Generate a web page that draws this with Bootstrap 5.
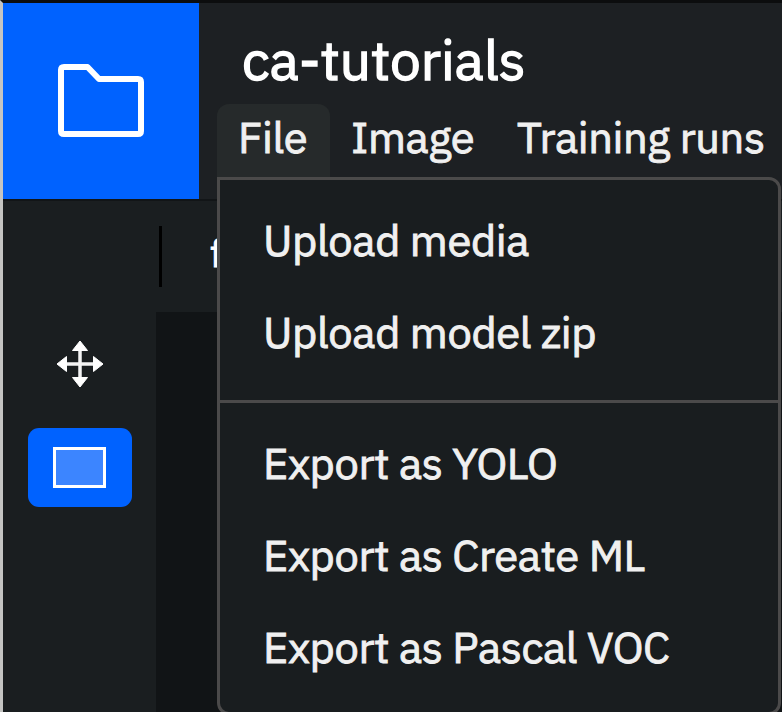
<!DOCTYPE html>
<html lang="en" data-bs-theme="dark">
<head>
<meta charset="utf-8">
<meta name="viewport" content="width=device-width, initial-scale=1">
<title>ca-tutorials</title>
<link href="https://cdn.jsdelivr.net/npm/bootstrap@5.3.0/dist/css/bootstrap.min.css" rel="stylesheet">
<style>
body { font-family: "IBM Plex Sans", Roboto, "Liberation Sans", sans-serif; background: #1a1e20; color: #f2f2f2; -webkit-text-stroke: .9px currentColor; }
.app { height: 712px; border-left: 3px solid #c4c4c2; border-top: 3px solid #0c0d0e; }
.topbar { height: 198px; background: #1d2023; border-bottom: 2px solid #121517; }
.project-btn { width: 196px; height: 196px; background: #0062ff; }
.titles { padding: 27px 0 0 18px; }
.project-name { font-size: 55px; line-height: 60px; height: 74px; margin: 0 0 0 25px; color: #fff; font-weight: 400; letter-spacing: -.05px; -webkit-text-stroke-width: 1.400px; }
.menu-tab { height: 76px; font-size: 43.500px; line-height: 65px; padding: 0 0 0 21px; border-radius: 12px 12px 0 0; color: #f0f0f0; white-space: nowrap; letter-spacing: -.4px; }
.menu-tab.active { background: #262a2b; }
.t-file { width: 113px; }
.t-image { width: 166px; }
.toolbar-row { height: 111px; padding: 25px 0 0 156px; }
.divider { width: 3px; height: 61px; background: #000; }
.file-label { font-size: 38px; line-height: 54px; margin-left: 48px; color: #fff; }
.tools { width: 153px; padding-top: 25px; gap: 37px; }
.tool-on { width: 104px; height: 79px; border-radius: 11px; background: #0062ff; }
.canvas-area { background: #111416; }
.file-menu { position: absolute; left: 217px; top: 177px; width: 564px; height: 538px; background: #191d1f; border: 3px solid #4b4a4a; border-radius: 0 12px 12px 12px; padding: 14px 0 0; font-size: 43.500px; letter-spacing: -.4px; }
.file-menu .dropdown-item { height: 92px; line-height: 92px; padding: 0 0 0 43px; color: #f0f0f0; background: none; }
.file-menu .dropdown-divider { margin: 22px 0 14px; border-top: 3px solid #4b4a4a; opacity: 1; }
</style>
</head>
<body class="overflow-hidden">
<div class="app d-flex flex-column position-relative overflow-hidden">
  <header class="topbar d-flex flex-shrink-0">
    <div class="project-btn d-flex flex-shrink-0 align-items-center justify-content-center">
      <svg width="88" height="76" viewBox="0 0 88 76" fill="none" stroke="#fff" stroke-width="6" stroke-linejoin="round"><path d="M7 4H30.500L42 16H81Q84 16 84 19V68Q84 71 81 71H7Q4 71 4 68V7Q4 4 7 4Z"/></svg>
    </div>
    <div class="titles">
      <h1 class="project-name">ca-tutorials</h1>
      <nav class="d-flex">
        <div class="menu-tab active t-file">File</div>
        <div class="menu-tab t-image">Image</div>
        <div class="menu-tab">Training runs</div>
      </nav>
    </div>
  </header>
  <div class="toolbar-row d-flex flex-shrink-0">
    <div class="divider"></div>
    <div class="file-label">f</div>
  </div>
  <main class="d-flex flex-grow-1">
    <aside class="tools d-flex flex-column align-items-center flex-shrink-0">
      <svg class="flex-shrink-0" width="54" height="54" viewBox="-27 -27 54 54"><path d="M0-18V18M-18 0H18" stroke="#f4f4f4" stroke-width="3.500"/><path d="M0-23L7.500-13.500H-7.500ZM0 23L7.500 13.500H-7.500ZM-23 0L-13.500-7.500V7.500ZM23 0L13.500-7.500V7.500Z" fill="#fff" stroke="#fff" stroke-width="1" stroke-linejoin="round"/></svg>
      <div class="tool-on d-flex align-items-center justify-content-center">
        <svg width="54" height="42" viewBox="0 0 54 42"><rect x="1.500" y="1.500" width="50" height="38" fill="#3c85ff" stroke="#fff" stroke-width="3"/></svg>
      </div>
    </aside>
    <section class="canvas-area flex-grow-1"></section>
  </main>
</div>
<div class="file-menu">
  <a class="dropdown-item">Upload media</a>
  <a class="dropdown-item">Upload model zip</a>
  <hr class="dropdown-divider">
  <a class="dropdown-item">Export as YOLO</a>
  <a class="dropdown-item">Export as Create ML</a>
  <a class="dropdown-item">Export as Pascal VOC</a>
</div>
<script src="https://cdn.jsdelivr.net/npm/bootstrap@5.3.0/dist/js/bootstrap.bundle.min.js"></script>
</body>
</html>
